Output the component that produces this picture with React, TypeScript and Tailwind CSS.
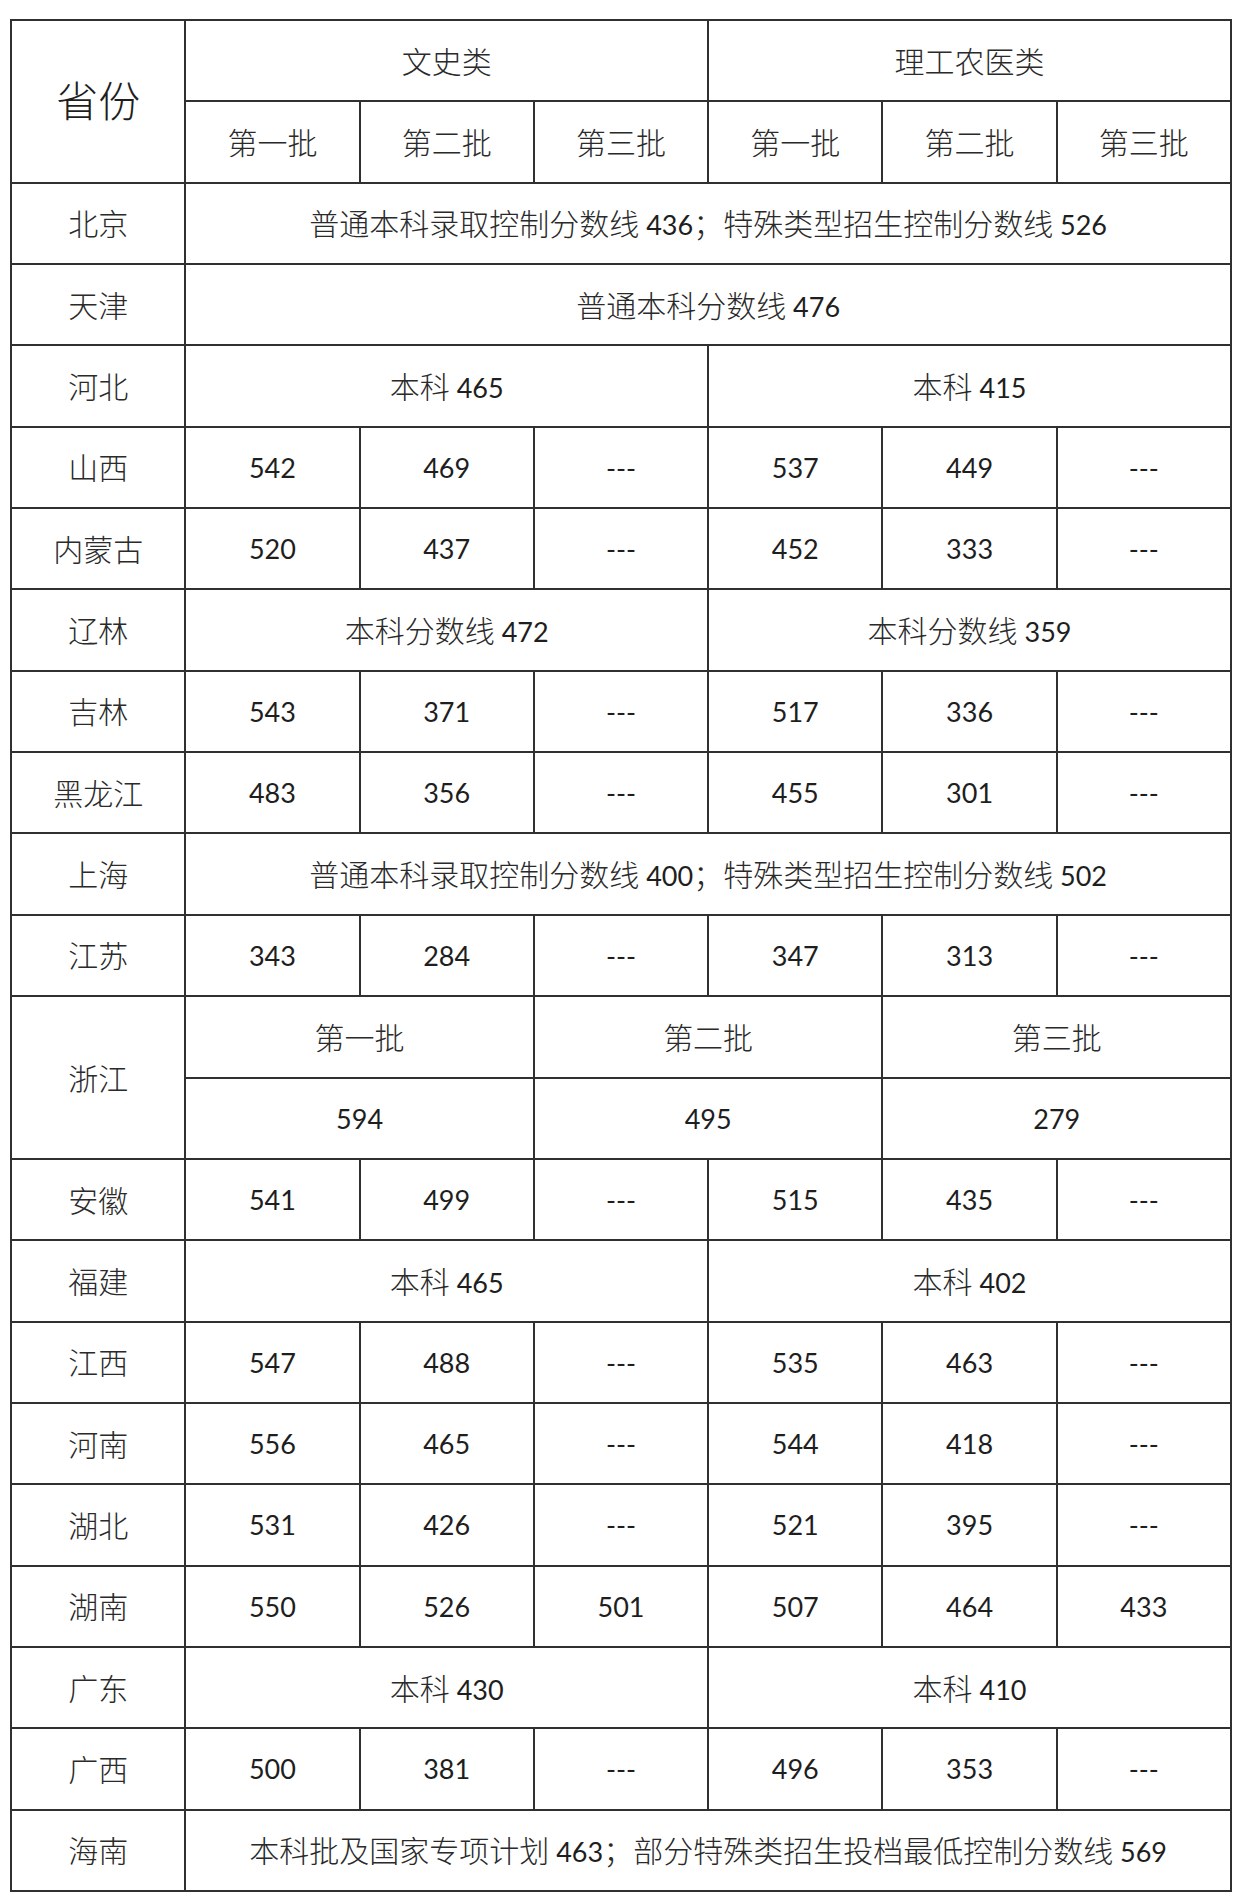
import React from 'react';

type Row = {name: string; cells: (string | [string, number])[]};

// [text, span] spans several columns, plain string takes one
const rows: Row[] = [
  {name: '北京', cells: [['普通本科录取控制分数线 436；特殊类型招生控制分数线 526', 6]]},
  {name: '天津', cells: [['普通本科分数线 476', 6]]},
  {name: '河北', cells: [['本科 465', 3], ['本科 415', 3]]},
  {name: '山西', cells: ['542', '469', '---', '537', '449', '---']},
  {name: '内蒙古', cells: ['520', '437', '---', '452', '333', '---']},
  {name: '辽林', cells: [['本科分数线 472', 3], ['本科分数线 359', 3]]},
  {name: '吉林', cells: ['543', '371', '---', '517', '336', '---']},
  {name: '黑龙江', cells: ['483', '356', '---', '455', '301', '---']},
  {name: '上海', cells: [['普通本科录取控制分数线 400；特殊类型招生控制分数线 502', 6]]},
  {name: '江苏', cells: ['343', '284', '---', '347', '313', '---']},
];

const rows2: Row[] = [
  {name: '安徽', cells: ['541', '499', '---', '515', '435', '---']},
  {name: '福建', cells: [['本科 465', 3], ['本科 402', 3]]},
  {name: '江西', cells: ['547', '488', '---', '535', '463', '---']},
  {name: '河南', cells: ['556', '465', '---', '544', '418', '---']},
  {name: '湖北', cells: ['531', '426', '---', '521', '395', '---']},
  {name: '湖南', cells: ['550', '526', '501', '507', '464', '433']},
  {name: '广东', cells: [['本科 430', 3], ['本科 410', 3]]},
  {name: '广西', cells: ['500', '381', '---', '496', '353', '---']},
  {name: '海南', cells: [['本科批及国家专项计划 463；部分特殊类招生投档最低控制分数线 569', 6]]},
];

const spanClass: Record<number, string> = {
  1: 'col-span-1',
  2: 'col-span-2',
  3: 'col-span-3',
  6: 'col-span-6',
};

// chinese runs are a bit larger and lighter, digits stay regular
function Txt({text}: {text: string}) {
  const parts = text.split(/([\u4e00-\u9fff；]+)/).filter(Boolean);
  return (
    <span>
      {parts.map((p, i) =>
        /[\u4e00-\u9fff；]/.test(p) ? (
          <span key={i} className="font-light text-[30px] text-[#2a2a2a]">{p}</span>
        ) : (
          <span key={i}>{p}</span>
        ),
      )}
    </span>
  );
}

function Cell({text, span = 1, extra = ''}: {text: string; span?: number; extra?: string}) {
  return (
    <div className={`${spanClass[span]} ${extra} bg-white flex items-center justify-center whitespace-pre`}>
      <Txt text={text} />
    </div>
  );
}

function DataRow({row}: {row: Row}) {
  return (
    <>
      <Cell text={row.name} />
      {row.cells.map((c, i) =>
        typeof c === 'string' ? <Cell key={i} text={c} /> : <Cell key={i} text={c[0]} span={c[1]} />,
      )}
    </>
  );
}

export default function App() {
  return (
    <div className="bg-white w-[1242px] h-[1903px] pt-[19px] pl-[10px]">
      <div
        className="grid grid-cols-7 grid-rows-[repeat(23,minmax(0,1fr))] gap-[2px] p-[2px] bg-[#303030] w-[1222px] h-[1873px] text-[27px] text-[#1e1e1e] leading-none"
        style={{fontFamily: "Lato, 'Noto Sans CJK SC', sans-serif"}}
      >
        <div className="row-span-2 bg-white flex items-center justify-center">
          <span className="font-light text-[42px] text-[#1e1e1e]">省份</span>
        </div>
        <Cell text="文史类" span={3} />
        <Cell text="理工农医类" span={3} />
        {['第一批', '第二批', '第三批', '第一批', '第二批', '第三批'].map((t, i) => (
          <Cell key={i} text={t} />
        ))}

        {rows.map((r) => (
          <DataRow key={r.name} row={r} />
        ))}

        <Cell text="浙江" extra="row-span-2" />
        <Cell text="第一批" span={2} />
        <Cell text="第二批" span={2} />
        <Cell text="第三批" span={2} />
        <Cell text="594" span={2} />
        <Cell text="495" span={2} />
        <Cell text="279" span={2} />

        {rows2.map((r) => (
          <DataRow key={r.name} row={r} />
        ))}
      </div>
    </div>
  );
}
